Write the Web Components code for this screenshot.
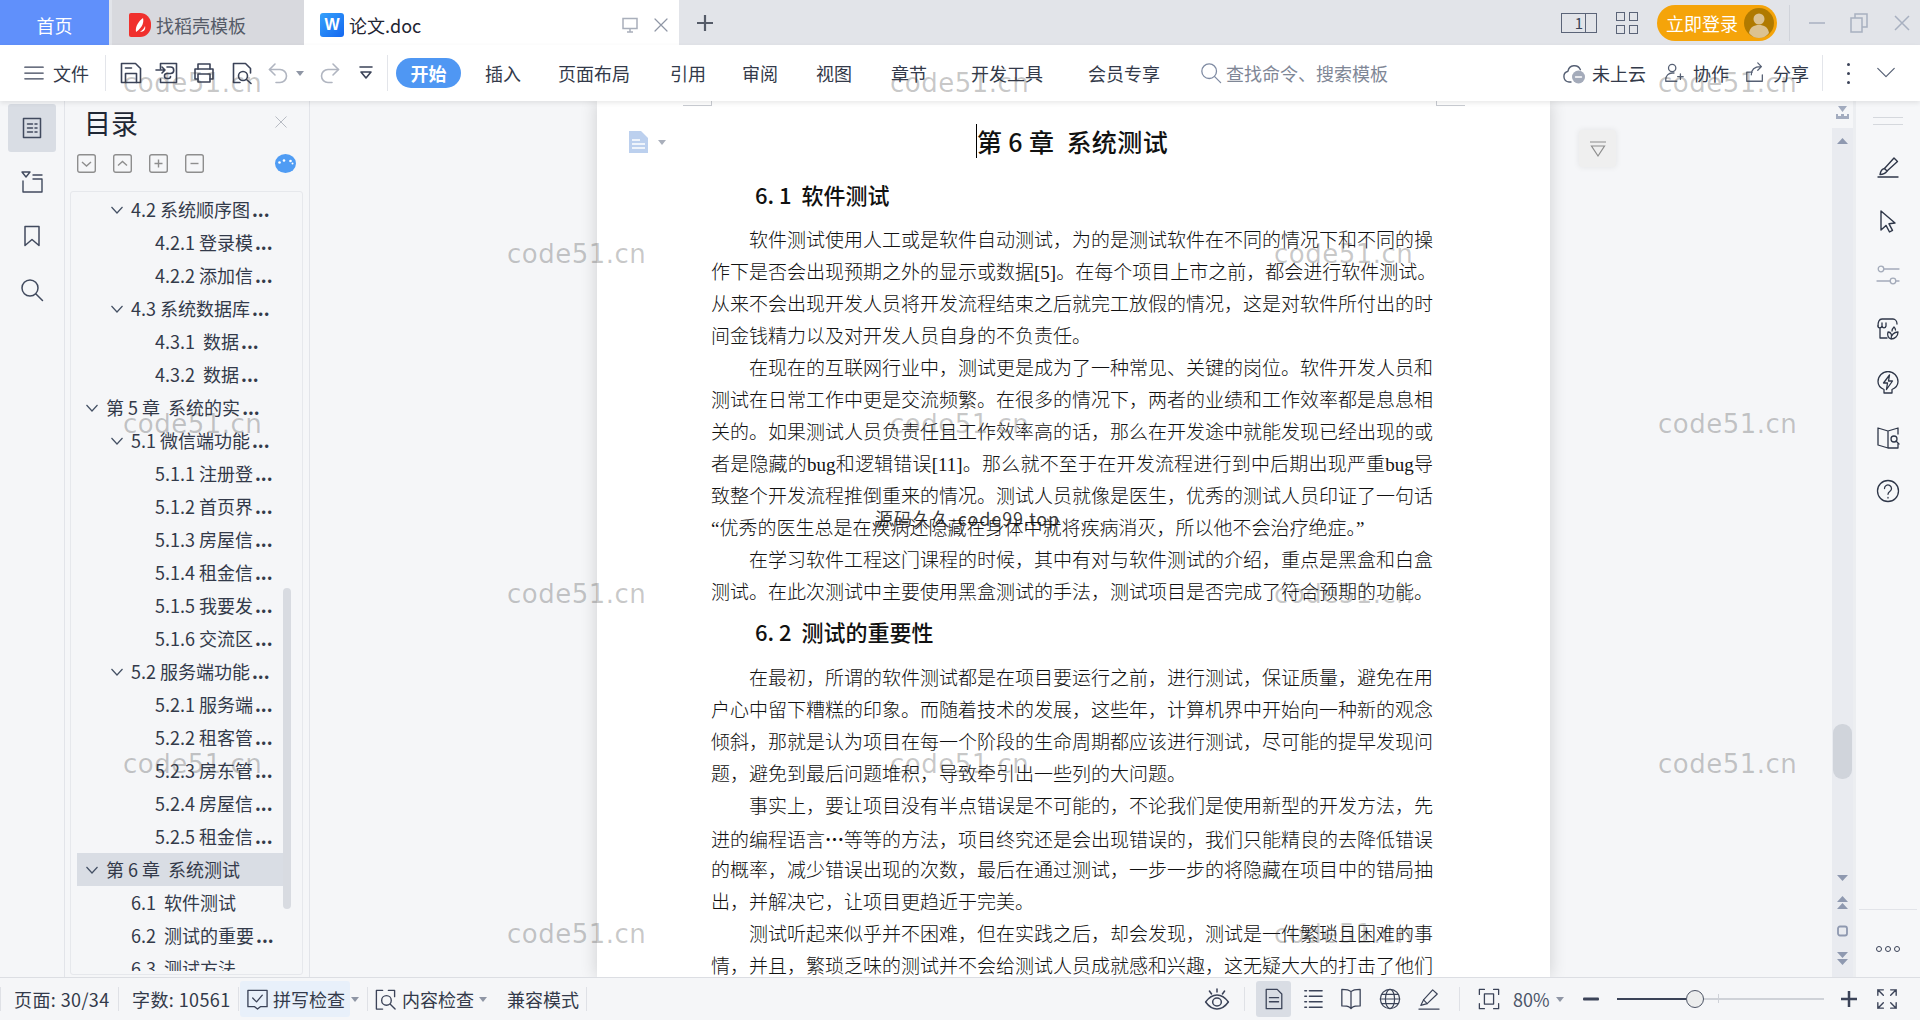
<!DOCTYPE html>
<html lang="zh-CN">
<head>
<meta charset="utf-8">
<title>论文.doc</title>
<style>
  html, body { margin: 0; height: 100%; overflow: hidden; }
  body { font-family: "Noto Sans CJK SC", sans-serif; background: #f5f6f8; }
</style>
</head>
<body>
<wps-app></wps-app>
<script>
// Icon strokes, all on a 24x24 box.
var ICONS = {
  menu: '<path d="M2 5h20M2 12h20M2 19h20"/>',
  save: '<path d="M2.5 2.5h14l5 5v14h-19z"/><path d="M6.5 21.5v-9h11v9M6.5 7h6"/>',
  insert: '<path d="M5.5 8V2.5h16v19h-16V18"/><path d="M1 9h9M7 6l3 3-3 3"/><path d="M12 6h3.5a3.2 3.2 0 0 1 0 6.5H12a2.5 2.5 0 0 0 0 5h1.5a2 2 0 0 0 2-2"/>',
  print: '<path d="M6 8V3h12v5"/><path d="M6 18H3V8h18v10h-3"/><path d="M6 13h12v8H6z"/>',
  preview: '<path d="M10 21.5H3.5v-19h12l5 5V12"/><circle cx="13" cy="15" r="4.5"/><path d="M16.5 18.5l4.5 4"/>',
  undo: '<path d="M9 3L3.5 8.5 9 14"/><path d="M3.5 8.5H14a6.5 6.5 0 0 1 0 13h-4"/>',
  redo: '<path d="M15 3l5.5 5.5L15 14"/><path d="M20.5 8.5H10a6.5 6.5 0 0 0 0 13h4"/>',
  quick: '<path d="M6 6h12M7 11l5 6 5-6z"/>',
  search: '<circle cx="10" cy="10" r="8"/><path d="M16 16l6.5 6.5"/>',
  cloud: '<path d="M9 21H7a5.5 5.5 0 0 1-1-10.8 6.5 6.5 0 0 1 12.4-1.5"/><circle cx="16.5" cy="16" r="6.5" fill="#a4abba" stroke="none"/><path d="M13.5 16h6" stroke="#fff"/>',
  people: '<circle cx="10" cy="6.5" r="4"/><path d="M3 21v-2c0-4 3-7 7-7h2M3 21h12"/><path d="M16 16h6M19 13v6"/>',
  share: '<path d="M9 11H3v10h17v-7"/><path d="M8 14c0-6 4-9 10-9M15 1l4 4-4 4"/>',
  chevdown: '<path d="M3 7l9 9 9-9"/>',
  toc: '<path d="M3.5 2.5h17v19h-17z"/><path d="M7.5 8h5M15 8h2M7.5 12h5M15 12h2M7.5 16h5M15 16h2"/>',
  tree: '<path d="M2 2h8L6 7z"/><path d="M13 5h9M3 11v11h19V9h-9"/>',
  bookmark: '<path d="M5 2.5h14v19l-7-6-7 6z"/>',
  close: '<path d="M3 3l18 18M21 3L3 21"/>',
  brush: '<path d="M2 22h20"/><path d="M8.5 13.5L18 3l3.5 3.5L11 16"/><path d="M8.5 13.5c-3 .5-4 3-4.5 6 2 0 5-.5 7-3.5z"/>',
  cursor: '<path d="M5 2l14 12-6 .8 3.5 6.5-3 1.7-3.5-6.6L5 21z"/>',
  sliders: '<circle cx="5" cy="6" r="2.8"/><path d="M8 6h15M1 18h13"/><circle cx="17" cy="18" r="2.8"/><path d="M20 18h3"/>',
  store: '<path d="M2 9c0-4 1-7 4-7h11c2 0 4 2 4 5"/><path d="M2 9c0 2.5 3.5 2.5 4 0V6M6 9c.5 2.5 3.5 2.5 4 0V6"/><path d="M4 11v10h7"/><path d="M15 22c-3-1-4-4-3-7 3 0 4.500 3 3 7zM15 22c4 0 7-3 7-7-4 0-7 3-7 7zM16 14c0-2 1-3 2-4 1 1 1.500 2 1.500 3"/>',
  bulb: '<path d="M8 22v-3.500c-3.500-1.500-6-4.500-6-8a10 10 0 0 1 20 0c0 3.500-2.500 6.500-6 8V22z"/><path d="M13.500 4L7.500 12h4l-1 6.500 6-8.500h-4z"/>',
  bookfind: '<path d="M12 6L2 3v17l10 3V6zM12 6l10-3v6M12 23h10v-4"/><circle cx="18" cy="14" r="3"/><path d="M20 16l3 3"/>',
  help: '<circle cx="12" cy="12" r="10.500"/><path d="M8.500 9.500a3.500 3.500 0 1 1 5.500 2.800c-1.300.9-2 1.600-2 3"/><path d="M12 18.500v.5"/>',
  spell: '<path d="M2 2.500h20v17h-7l-3 2.500-3-2.500H2z"/><path d="M7 10.500l4 4 6-7"/>',
  inspect: '<path d="M9 22H2.500V2.500H9M15 2.500h6.500V9"/><circle cx="13" cy="13" r="5"/><path d="M17 17l5 5"/>',
  eye: '<path d="M1.500 15c3-4.500 6.500-7 10.500-7s7.500 2.500 10.500 7c-3 4.500-6.500 7-10.500 7s-7.500-2.500-10.500-7z"/><circle cx="12" cy="15" r="4"/><path d="M12 2v3M5 4l2 3M19 4l-2 3"/>',
  page: '<path d="M3.500 1.500h12l5 5v16h-17z"/><path d="M7 10.500h10M7 15h10"/>',
  list: '<path d="M3 3h2M8 3h14M3 9h2M8 9h14M3 15h2M8 15h14M3 21h2M8 21h14"/>',
  book: '<path d="M12 4c-2-2-6-2.500-10-2.500v18c4 0 7 .5 8.500 1.500l1.500 1.500 1.500-1.500c1.500-1 4.500-1.500 8.500-1.500v-18c-4 0-8 .5-10 2.500zM12 4v18"/>',
  globe: '<circle cx="12" cy="12" r="10.500"/><path d="M1.500 12h21M3 7h18M3 17h18"/><ellipse cx="12" cy="12" rx="5" ry="10.500"/>',
  pen: '<path d="M1 23h22"/><path d="M3 19l3-6L16 2l5 4.500L10 17z"/><path d="M6 13l4 4"/>',
  fit: '<path d="M1.500 7V1.500H7M17 1.500h5.500V7M22.500 17v5.500H17M7 22.500H1.500V17"/><path d="M7 6.500h10v11H7z"/>',
  full: '<path d="M2 8V2h6M2 2l6 6M22 8V2h-6M22 2l-6 6M2 16v6h6M2 22l6-6M22 16v6h-6M22 22l-6-6"/>'
}

class UiIcon extends HTMLElement {
  constructor() {
    super()
    var size = this.getAttribute('size') || 24
    var w = this.getAttribute('w') || size
    var sw = this.getAttribute('sw') || 1.6
    var color = this.getAttribute('color') || '#3b4358'
    this.attachShadow({ mode: 'open' }).innerHTML = `
      <style>:host { display: inline-flex; flex: none; } svg { display: block; }</style>
      <svg width="${w}" height="${size}" viewBox="0 0 24 24" preserveAspectRatio="none" fill="none" stroke="${color}"
           stroke-width="${sw}" stroke-linecap="round" stroke-linejoin="round">${ICONS[this.getAttribute('name')] || ''}</svg>`
  }
}
customElements.define('ui-icon', UiIcon)

var templateTabs = document.createElement('template')
templateTabs.innerHTML = `
<style>
  :host { display: flex; height: 45px; background: #e2e4e9; font-size: 18px; flex: none; }
  .tab { display: flex; align-items: center; height: 45px; padding-top: 4px; box-sizing: border-box; white-space: nowrap; }
  .home { width: 109px; justify-content: center; background: #6090fb; color: #fff; }
  .tpl { width: 192px; margin-left: 3px; background: #d8d9de; color: #555b68; padding-left: 17px; }
  .doc { width: 375px; background: #fff; color: #1f2533; padding-left: 16px; }
  .red { width: 22px; height: 24px; background: #f0302d; border-radius: 2px 11px 11px 2px; margin-right: 5px; display: flex; align-items: center; justify-content: center; }
  .w { width: 24px; height: 24px; border-radius: 3px; background: linear-gradient(135deg, #35a1fb, #1467f0); color: #fff; font: 700 16px/24px "Liberation Sans", sans-serif; text-align: center; margin-right: 5px; }
  .doc .name { width: 272px; }
  .plus { margin-left: 18px; padding-top: 0; }
  .right { margin-left: auto; display: flex; align-items: center; height: 45px; }
  .device { display: flex; width: 36px; height: 20px; margin-top: 1px; border: 1.5px solid #5b6478; box-sizing: border-box; color: #3b4358; font: 15px/18px "Noto Sans CJK SC", sans-serif; }
  .device span { flex: 1; text-align: right; padding-right: 2px; }
  .device i { width: 11px; border-left: 1.5px solid #5b6478; box-sizing: border-box; position: relative; }
  .grid { display: grid; grid-template-columns: 9px 9px; gap: 4px; margin-left: 19px; }
  .grid i { height: 9px; border: 1.5px solid #5b6478; box-sizing: border-box; }
  .login { display: flex; align-items: center; width: 120px; height: 36px; margin-left: 19px; border-radius: 18px; background: #f5a40a; color: #fff; padding-left: 9px; box-sizing: border-box; white-space: nowrap; }
  .login svg { margin-left: 6px; flex: none; }
  .sep { width: 1px; height: 36px; background: #d0d3da; margin-left: 12px; }
</style>
<div class="tab home">首页</div>
<div class="tab tpl"><div class="red"><svg width="12" height="16" viewBox="0 0 12 16"><path d="M2 15C1 9 5 4 9 1c1 4 0 9-7 14zM6 15c2-2 4-3 5-6 1 3-1 6-5 6z" fill="#fff"/></svg></div>找稻壳模板</div>
<div class="tab doc"><div class="w">W</div><div class="name">论文.doc</div>
  <svg width="18" height="18" viewBox="0 0 18 18" fill="none" stroke="#a9afbb" stroke-width="1.500"><path d="M2 2.500h14v10H2zM9 12.500v3.500M6 16h6"/></svg>
  <ui-icon name="close" size="16" color="#8f96a5" sw="1.800" style="margin-left:14px"></ui-icon>
</div>
<div class="tab plus"><svg width="16" height="16" viewBox="0 0 16 16" stroke="#555b68" stroke-width="2.200"><path d="M0 8h16M8 0v16"/></svg></div>
<div class="right">
  <div class="device"><span>1</span><i></i></div>
  <div class="grid"><i></i><i></i><i></i><i></i></div>
  <div class="login">立即登录<svg width="30" height="30" viewBox="0 0 30 30"><circle cx="15" cy="15" r="15" fill="#b07a00"/><circle cx="15" cy="11" r="5.500" fill="#dcc290"/><path d="M5 25c1-6 5-8 10-8s9 2 10 8c-2 3-6 5-10 5s-8-2-10-5z" fill="#dcc290"/></svg></div>
  <div class="sep"></div>
  <svg style="margin-left:19px" width="16" height="16" viewBox="0 0 16 16" stroke="#a8b0c0" stroke-width="1.500" fill="none"><path d="M0 8h16"/></svg>
  <svg style="margin-left:25px" width="18" height="20" viewBox="0 0 18 20" stroke="#a8b0c0" stroke-width="1.500" fill="none"><path d="M5 5V1h12v13h-5M1 5h11v14H1z"/></svg>
  <svg style="margin-left:26px;margin-right:10px" width="16" height="16" viewBox="0 0 16 16" stroke="#a8b0c0" stroke-width="1.500" fill="none"><path d="M1 1l14 14M15 1L1 15"/></svg>
</div>`
class WpsTabs extends HTMLElement {
  constructor() {
    super()
    this.attachShadow({ mode: 'open' }).appendChild(templateTabs.content.cloneNode(true))
  }
}
customElements.define('wps-tabs', WpsTabs)

var templateToolbar = document.createElement('template')
templateToolbar.innerHTML = `
<style>
  :host { display: flex; align-items: center; height: 56px; background: #fff; padding-left: 23px; flex: none; box-sizing: border-box;
          font-size: 18px; color: #333a4a; box-shadow: 0 2px 5px rgba(0,0,0,.09); position: relative; z-index: 2; white-space: nowrap; }
  .sep { width: 1px; height: 36px; background: #e3e5ea; flex: none; }
  .pill { width: 65px; height: 30px; border-radius: 15px; background: #4f97f3; color: #fff; font-weight: 700; text-align: center; line-height: 30px; flex: none; }
  .caret { width: 0; height: 0; border: 4px solid transparent; border-top: 5px solid #8f96a5; border-bottom: 0; flex: none; }
  .find { color: #7f8796; }
  .dots { width: 20px; display: flex; flex-direction: column; align-items: center; gap: 6px; flex: none; }
  .dots i { width: 3px; height: 3px; border-radius: 50%; background: #3b4358; }
</style>
<ui-icon name="menu" size="20" w="22" sw="1.500"></ui-icon>
<span style="margin-left:8px">文件</span>
<div class="sep" style="margin-left:16px"></div>
<ui-icon name="save" style="margin-left:13px"></ui-icon>
<ui-icon name="insert" style="margin-left:12px"></ui-icon>
<ui-icon name="print" style="margin-left:13px"></ui-icon>
<ui-icon name="preview" style="margin-left:14px"></ui-icon>
<ui-icon name="undo" color="#b0b5c0" style="margin-left:12px"></ui-icon>
<div class="caret" style="margin-left:6px"></div>
<ui-icon name="redo" color="#b0b5c0" style="margin-left:14px"></ui-icon>
<ui-icon name="quick" style="margin-left:12px"></ui-icon>
<div class="sep" style="margin-left:9px"></div>
<div class="pill" style="margin-left:8px">开始</div>
<span style="margin-left:24px">插入</span>
<span style="margin-left:37px">页面布局</span>
<span style="margin-left:40px">引用</span>
<span style="margin-left:36px">审阅</span>
<span style="margin-left:38px">视图</span>
<span style="margin-left:39px">章节</span>
<span style="margin-left:44px">开发工具</span>
<span style="margin-left:45px">会员专享</span>
<ui-icon name="search" size="22" color="#7f8ba3" sw="1.400" style="margin-left:40px"></ui-icon>
<span class="find" style="margin-left:4px">查找命令、搜索模板</span>
<ui-icon name="cloud" style="margin-left:174px" sw="1.400" color="#566074"></ui-icon>
<span style="margin-left:6px">未上云</span>
<ui-icon name="people" size="22" sw="1.400" color="#566074" style="margin-left:17px"></ui-icon>
<span style="margin-left:8px">协作</span>
<ui-icon name="share" size="22" sw="1.400" color="#566074" style="margin-left:15px"></ui-icon>
<span style="margin-left:7px">分享</span>
<div class="sep" style="margin-left:13px"></div>
<div class="dots" style="margin-left:15px"><i></i><i></i><i></i></div>
<ui-icon name="chevdown" size="22" sw="1.300" color="#566074" style="margin-left:17px"></ui-icon>`
class WpsToolbar extends HTMLElement {
  constructor() {
    super()
    this.attachShadow({ mode: 'open' }).appendChild(templateToolbar.content.cloneNode(true))
  }
}
customElements.define('wps-toolbar', WpsToolbar)

// Outline entries: level, has chevron, label, cut off with dots, active
var TOC = [
  [2, 1, '4.2 系统顺序图', 1], [3, 0, '4.2.1 登录模', 1], [3, 0, '4.2.2 添加信', 1], [2, 1, '4.3 系统数据库', 1],
  [3, 0, '4.3.1 &nbsp;数据', 1], [3, 0, '4.3.2 &nbsp;数据', 1], [1, 1, '第 5 章 &nbsp;系统的实', 1],
  [2, 1, '5.1 微信端功能', 1], [3, 0, '5.1.1 注册登', 1], [3, 0, '5.1.2 首页界', 1], [3, 0, '5.1.3 房屋信', 1],
  [3, 0, '5.1.4 租金信', 1], [3, 0, '5.1.5 我要发', 1], [3, 0, '5.1.6 交流区', 1], [2, 1, '5.2 服务端功能', 1],
  [3, 0, '5.2.1 服务端', 1], [3, 0, '5.2.2 租客管', 1], [3, 0, '5.2.3 房东管', 1], [3, 0, '5.2.4 房屋信', 1],
  [3, 0, '5.2.5 租金信', 1], [1, 1, '第 6 章 &nbsp;系统测试', 0, 1], [2, 0, '6.1 &nbsp;软件测试', 0], [2, 0, '6.2 &nbsp;测试的重要', 1], [2, 0, '6.3 &nbsp;测试方法', 0]
]

class TocPanel extends HTMLElement {
  constructor() {
    super()
    var rows = TOC.map(function (r) {
      var left = { 1: 107, 2: 132, 3: 156 }[r[0]] - 72
      return `<div class="row ${r[4] ? 'on' : ''}" style="padding-left:${left}px">
        ${r[1] ? '<svg class="chev" width="12" height="8" viewBox="0 0 12 8" fill="none" stroke="#445064" stroke-width="1.200"><path d="M.5 1l5.500 6 5.500-6"/></svg>' : ''}
        <span>${r[2]}</span>${r[3] ? '<b>...</b>' : ''}</div>`
    }).join('')
    this.attachShadow({ mode: 'open' }).innerHTML = `
    <style>
      :host { display: flex; flex: none; width: 245px; height: 100%; box-sizing: border-box; flex-direction: column; border-right: 1px solid #e2e4e9; color: #333a4a; background: #f5f6f8; }
      .title { display: flex; align-items: center; height: 36px; margin-top: 3px; margin-bottom: 3px; padding-left: 19px; font-size: 27px; color: #1f2735; }
      .title ui-icon { margin-left: 136px; }
      .tools { display: flex; align-items: center; margin-top: 11px; padding-left: 12px; height: 19px; }
      .tools svg { margin-right: 17px; flex: none; }
      .blob { margin-left: 54px; }
      .box { position: relative; flex: 1; margin: 18px 6px 2px 5px; border: 1px solid #e6e8ec; border-radius: 3px; padding-top: 1px; min-height: 0; }
      .clip { height: 778px; overflow: hidden; }
      .row { position: relative; height: 33px; line-height: 33px; font-size: 18px; white-space: nowrap; display: flex; }
      .row b { font-weight: 700; margin-left: 2px; }
      .row.on { background: #d9dde4; margin: 0 19px 0 6px; padding-left: 29px !important; }
      .chev { position: absolute; top: 13px; margin-left: -20px; }
      .bar { position: absolute; right: 11px; top: 396px; width: 8px; height: 321px; background: #d8dbe1; border-radius: 4px; }
    </style>
    <div class="title">目录<ui-icon name="close" size="14" sw="1" color="#8a909c"></ui-icon></div>
    <div class="tools">
      <svg width="19" height="19" viewBox="0 0 19 19" fill="none" stroke="#8e8e8e" stroke-width="1.400"><rect x=".7" y=".7" width="17.600" height="17.600" rx="2"/><path d="M5 8l4.500 4L14 8"/></svg>
      <svg width="19" height="19" viewBox="0 0 19 19" fill="none" stroke="#8e8e8e" stroke-width="1.400"><rect x=".7" y=".7" width="17.600" height="17.600" rx="2"/><path d="M5 11.500l4.500-4 4.500 4"/></svg>
      <svg width="19" height="19" viewBox="0 0 19 19" fill="none" stroke="#8e8e8e" stroke-width="1.400"><rect x=".7" y=".7" width="17.600" height="17.600" rx="2"/><path d="M5.500 9.500h8M9.500 5.500v8"/></svg>
      <svg width="19" height="19" viewBox="0 0 19 19" fill="none" stroke="#8e8e8e" stroke-width="1.400"><rect x=".7" y=".7" width="17.600" height="17.600" rx="2"/><path d="M5.500 9.500h8"/></svg>
      <svg class="blob" width="21" height="19" viewBox="0 0 21 19"><ellipse cx="10.500" cy="9.500" rx="10.500" ry="9.500" fill="#4f9cf4"/><circle cx="4.500" cy="8.500" r="1.300" fill="#fff"/><circle cx="9" cy="6.500" r="1.300" fill="#fff"/><circle cx="15.500" cy="7" r="1.300" fill="#fff"/><circle cx="17.500" cy="9.500" r="1" fill="#fff"/></svg>
    </div>
    <div class="box"><div class="clip">${rows}</div><div class="bar"></div></div>`
  }
}
customElements.define('toc-panel', TocPanel)

class SideStrip extends HTMLElement {
  constructor() {
    super()
    this.attachShadow({ mode: 'open' }).innerHTML = `
    <style>
      :host { display: flex; flex: none; flex-direction: column; align-items: center; width: 65px; height: 100%; box-sizing: border-box; border-right: 1px solid #e2e4e9; background: #f5f6f8; padding-top: 3px; }
      div { display: flex; align-items: center; justify-content: center; width: 48px; height: 54px; }
      .on { height: 48px; margin-bottom: 3px; background: #d9dde4; border-radius: 3px; }
    </style>
    <div class="on"><ui-icon name="toc" sw="1.500" color="#414a5e"></ui-icon></div>
    <div><ui-icon name="tree" sw="1.400" color="#414a5e"></ui-icon></div>
    <div><ui-icon name="bookmark" sw="1.500" color="#414a5e"></ui-icon></div>
    <div><ui-icon name="search" sw="1.500" color="#414a5e"></ui-icon></div>`
  }
}
customElements.define('side-strip', SideStrip)

// Each block: type, lines, gap above. 'x' marks a line that runs to the right margin even if it ends the block.
var DOC_TEXT = [
  ['h1', '第 6 章&nbsp; 系统测试'],
  ['h2', '6. 1&nbsp; 软件测试', 19],
  ['p', ['软件测试使用人工或是软件自动测试，为的是测试软件在不同的情况下和不同的操',
    '作下是否会出现预期之外的显示或数据[5]。在每个项目上市之前，都会进行软件测试。',
    '从来不会出现开发人员将开发流程结束之后就完工放假的情况，这是对软件所付出的时',
    '间金钱精力以及对开发人员自身的不负责任。'], 14],
  ['p', ['在现在的互联网行业中，测试更是成为了一种常见、关键的岗位。软件开发人员和',
    '测试在日常工作中更是交流频繁。在很多的情况下，两者的业绩和工作效率都是息息相',
    '关的。如果测试人员负责任且工作效率高的话，那么在开发途中就能发现已经出现的或',
    '者是隐藏的bug和逻辑错误[11]。那么就不至于在开发流程进行到中后期出现严重bug导',
    '致整个开发流程推倒重来的情况。测试人员就像是医生，优秀的测试人员印证了一句话',
    '“优秀的医生总是在疾病还隐藏在身体中就将疾病消灭，所以他不会治疗绝症。”']],
  ['p', ['在学习软件工程这门课程的时候，其中有对与软件测试的介绍，重点是黑盒和白盒',
    '测试。在此次测试中主要使用黑盒测试的手法，测试项目是否完成了符合预期的功能。'], 0, 'x'],
  ['h2', '6. 2&nbsp; 测试的重要性', 5],
  ['p', ['在最初，所谓的软件测试都是在项目要运行之前，进行测试，保证质量，避免在用',
    '户心中留下糟糕的印象。而随着技术的发展，这些年，计算机界中开始向一种新的观念',
    '倾斜，那就是认为项目在每一个阶段的生命周期都应该进行测试，尽可能的提早发现问',
    '题，避免到最后问题堆积，导致牵引出一些列的大问题。'], 15],
  ['p', ['事实上，要让项目没有半点错误是不可能的，不论我们是使用新型的开发方法，先',
    '进的编程语言<span class="cjk">…</span>等等的方法，项目终究还是会出现错误的，我们只能精良的去降低错误',
    '的概率，减少错误出现的次数，最后在通过测试，一步一步的将隐藏在项目中的错局抽',
    '出，并解决它，让项目更趋近于完美。']],
  ['p', ['测试听起来似乎并不困难，但在实践之后，却会发现，测试是一件繁琐且困难的事',
    '情，并且，繁琐乏味的测试并不会给测试人员成就感和兴趣，这无疑大大的打击了他们'], 0, 'x']
]

class DocPage extends HTMLElement {
  constructor() {
    super()
    var html = DOC_TEXT.map(function (b) {
      if (b[0] === 'h1') return `<div class="h1"><span>${b[1]}</span></div>`
      if (b[0] === 'h2') return `<div class="h2" style="margin-top:${b[2]}px">${b[1]}</div>`
      return `<div class="para" style="margin-top:${b[2] || 0}px">` + b[1].map(function (t, i) {
        var last = i === b[1].length - 1 && b[3] !== 'x'
        return `<div class="l ${i === 0 ? 'first' : ''} ${last ? 'end' : ''}">${t}</div>`
      }).join('') + '</div>'
    }).join('')
    this.attachShadow({ mode: 'open' }).innerHTML = `
    <style>
      :host { display: block; position: relative; flex: none; width: 953px; height: 100%; margin-left: 287px; background: #fff; box-sizing: border-box;
              padding: 23px 0 0 114px; overflow: hidden; color: #111; box-shadow: 0 0 16px rgba(0,0,0,.16); }
      .wrap { width: 722px; }
      .h1 { height: 34px; line-height: 34px; font-size: 25px; font-weight: 500; text-align: center; color: #111; white-space: nowrap; letter-spacing: .4px; }
      .h1 span { display: inline-block; border-left: 1.500px solid #000; height: 34px; }
      .h2 { height: 34px; line-height: 34px; padding-left: 44px; font-size: 22px; font-weight: 500; white-space: nowrap; }
      .l { height: 32px; font: 300 19px/32px "Liberation Serif", "Noto Sans CJK SC", sans-serif; text-align: justify; text-align-last: justify; white-space: nowrap; }
      .l.first { text-indent: 38px; }
      .l.end { text-align-last: left; }
      .cjk { font-family: "Noto Sans CJK SC", sans-serif; font-weight: 700; }
      .crop { position: absolute; top: 0; width: 28px; height: 4px; border-bottom: 1px solid #c9ccd2; }
      .crop.a { left: 86px; border-right: 1px solid #c9ccd2; }
      .crop.b { left: 839px; border-left: 1px solid #c9ccd2; }
      .note { position: absolute; left: 32px; top: 30px; display: flex; align-items: center; gap: 10px; }
      .tri { width: 0; height: 0; border: 4px solid transparent; border-top: 5px solid #a9afbb; border-bottom: 0; }
    </style>
    <div class="crop a"></div><div class="crop b"></div>
    <div class="note"><svg width="19" height="22" viewBox="0 0 19 22"><path d="M0 0h12l7 7v15H0z" fill="#bcd0ee"/><path d="M3 9h8M3 13h13M3 17h13" stroke="#fff" stroke-width="1.500"/></svg><div class="tri"></div></div>
    <div class="wrap">${html}</div>`
  }
}
customElements.define('doc-page', DocPage)

class RightRail extends HTMLElement {
  constructor() {
    super()
    this.attachShadow({ mode: 'open' }).innerHTML = `
    <style>
      :host { display: flex; flex: none; width: 88px; height: 100%; }
      .scroll { position: relative; width: 21px; background: #e9ebf0; margin-top: 27px; }
      .thumb { position: absolute; left: 1px; top: 596px; width: 19px; height: 55px; border-radius: 9px; background: #d0d4db; }
      .scroll svg { position: absolute; left: 3px; }
      .rail { flex: 1; display: flex; flex-direction: column; align-items: center; background: #f6f7f9; border-left: 3px solid #eceef1; }
      .grip { width: 30px; height: 6px; margin-top: 16px; border-top: 1.500px solid #d5d8dd; border-bottom: 1.500px solid #d5d8dd; box-sizing: content-box; }
      .rail ui-icon { margin-top: 30px; }
      .hr { width: 58px; height: 1px; background: #e2e4e9; margin-top: 406px; }
      .rings { display: flex; gap: 3px; margin-top: 36px; }
      .rings i { width: 6px; height: 6px; border: 1.500px solid #3b4358; border-radius: 50%; box-sizing: border-box; }
    </style>
    <div class="scroll">
      <svg width="15" height="13" viewBox="0 0 15 13" fill="#a3acbf" style="top:-22px"><path d="M3 0h9L7.500 6zM1 8h2v2h3V8h3v2h3V8h2v5H1z"/></svg>
      <svg width="15" height="8" viewBox="0 0 15 8" fill="#8f99b0" style="top:9px"><path d="M7.500 1l5.500 6H2z"/></svg>
      <div class="thumb"></div>
      <svg width="15" height="8" viewBox="0 0 15 8" fill="#8f99b0" style="top:746px"><path d="M2 1h11L7.500 7z"/></svg>
      <svg width="15" height="14" viewBox="0 0 15 14" fill="#8f99b0" style="top:768px"><path d="M7.500 0L13 6H2zM7.500 7L13 13H2z"/></svg>
      <svg width="15" height="12" viewBox="0 0 15 12" fill="none" stroke="#8f99b0" stroke-width="1.800" style="top:797px"><rect x="3" y="1.500" width="9" height="9" rx="2"/></svg>
      <svg width="15" height="14" viewBox="0 0 15 14" fill="#8f99b0" style="top:824px"><path d="M2 0h11L7.500 6zM2 7h11L7.500 13z"/></svg>
    </div>
    <div class="rail">
      <div class="grip"></div>
      <ui-icon name="brush" sw="1.400" color="#2f3749"></ui-icon>
      <ui-icon name="cursor" sw="1.400" color="#2f3749"></ui-icon>
      <ui-icon name="sliders" sw="1.300" color="#a4abba"></ui-icon>
      <ui-icon name="store" sw="1.300" color="#2f3749"></ui-icon>
      <ui-icon name="bulb" sw="1.300" color="#2f3749"></ui-icon>
      <ui-icon name="bookfind" sw="1.300" color="#2f3749"></ui-icon>
      <ui-icon name="help" sw="1.300" color="#2f3749"></ui-icon>
      <div class="hr"></div>
      <div class="rings"><i></i><i></i><i></i></div>
    </div>`
  }
}
customElements.define('right-rail', RightRail)

var templateStatus = document.createElement('template')
templateStatus.innerHTML = `
<style>
  :host { display: flex; align-items: center; height: 43px; flex: none; box-sizing: border-box; border-top: 1px solid #dcdee3; background: #f5f6f8;
          font-size: 18px; color: #333a4a; white-space: nowrap; position: relative; z-index: 2; }
  .sep { width: 1px; height: 24px; background: #dfe1e6; flex: none; }
  .sel { display: flex; align-items: center; height: 36px; background: #e8f0fa; border-radius: 3px; flex: none; }
  .on { background: #d9dde4; justify-content: center; }
  .caret { width: 0; height: 0; border: 4px solid transparent; border-top: 5px solid #8f96a5; border-bottom: 0; flex: none; }
  .line { height: 1.500px; flex: none; }
  .knob { width: 18px; height: 18px; border: 1.500px solid #4c5364; border-radius: 50%; background: #eceded; box-sizing: border-box; flex: none; }
  .tail { position: relative; background: #cfd2d8; }
  .tail::after { content: ""; position: absolute; left: 14px; top: -4px; width: 1px; height: 9px; background: #cfd2d8; }
</style>
<div class="sep"></div>
<span style="margin-left:13px;width:96px;letter-spacing:.4px">页面: 30/34</span>
<div class="sep" style="margin-left:8px"></div>
<span style="margin-left:13px;width:98px;letter-spacing:.4px">字数: 10561</span>
<div class="sep" style="margin-left:8px"></div>
<div class="sel" style="margin-left:1px;width:110px"><ui-icon name="spell" size="23" sw="1.400" style="margin-left:6px"></ui-icon><span style="margin-left:4px">拼写检查</span></div>
<div class="caret" style="margin-left:1px"></div>
<div class="sep" style="margin-left:8px"></div>
<ui-icon name="inspect" size="23" sw="1.400" style="margin-left:6px"></ui-icon>
<span style="margin-left:5px">内容检查</span>
<div class="caret" style="margin-left:5px"></div>
<span style="margin-left:20px">兼容模式</span>
<div class="sep" style="margin-left:7px"></div>
<ui-icon name="eye" size="24" w="26" sw="1.400" style="margin-left:617px"></ui-icon>
<div class="sep" style="margin-left:14px"></div>
<div class="sel on" style="margin-left:11px;width:35px"><ui-icon name="page" size="22" sw="1.400"></ui-icon></div>
<ui-icon name="list" size="22" sw="1.400" style="margin-left:11px"></ui-icon>
<ui-icon name="book" size="22" sw="1.400" style="margin-left:16px"></ui-icon>
<ui-icon name="globe" size="22" sw="1.300" style="margin-left:17px"></ui-icon>
<ui-icon name="pen" size="22" sw="1.300" style="margin-left:17px"></ui-icon>
<div class="sep" style="margin-left:19px"></div>
<ui-icon name="fit" size="22" sw="1.400" style="margin-left:18px"></ui-icon>
<span style="margin-left:13px;color:#4c5568;width:37px">80%</span>
<div class="caret" style="margin-left:6px"></div>
<svg width="16" height="4" viewBox="0 0 16 4" style="margin-left:19px;flex:none"><rect width="16" height="3" y=".5" rx="1" fill="#3b4358"/></svg>
<div class="line" style="margin-left:18px;width:69px;background:#3b4358"></div>
<div class="knob"></div>
<div class="line tail" style="width:120px"></div>
<svg width="16" height="16" viewBox="0 0 16 16" stroke="#3b4358" stroke-width="2.500" style="margin-left:17px;flex:none"><path d="M0 8h16M8 0v16"/></svg>
<ui-icon name="full" size="22" sw="1.500" style="margin-left:19px"></ui-icon>`
class StatusBar extends HTMLElement {
  constructor() {
    super()
    this.attachShadow({ mode: 'open' }).appendChild(templateStatus.content.cloneNode(true))
  }
}
customElements.define('status-bar', StatusBar)

// Watermarks sit on top of everything, at their place on the screen.
class WaterMarks extends HTMLElement {
  constructor() {
    super()
    var spots = [[123, 83], [890, 83], [1658, 83], [507, 254], [1274, 254], [123, 424], [890, 424], [1658, 424],
      [507, 594], [1274, 594], [123, 764], [890, 764], [1658, 764], [507, 934], [1274, 934]]
    var html = spots.map(function (s) { return `<span style="left:${s[0]}px;top:${s[1] - 17}px">code51.cn</span>` }).join('')
    this.attachShadow({ mode: 'open' }).innerHTML = `
    <style>
      :host { position: absolute; left: 0; top: 0; width: 1920px; height: 1020px; pointer-events: none; z-index: 5; overflow: hidden; }
      span { position: absolute; font: 26px/34px "DejaVu Sans", sans-serif; letter-spacing: .5px; color: rgba(60,60,60,.28); white-space: nowrap; }
      .mid { left: 875px; top: 505px; font: 18px/26px "Noto Sans CJK SC", sans-serif; color: rgba(20,20,20,.85); letter-spacing: .9px; }
    </style>
    ${html}<span class="mid">源码久久-code99.top</span>`
  }
}
customElements.define('water-marks', WaterMarks)

class WpsApp extends HTMLElement {
  constructor() {
    super()
    this.attachShadow({ mode: 'open' }).innerHTML = `
    <style>
      :host { display: flex; flex-direction: column; position: relative; width: 1920px; height: 1020px; overflow: hidden; }
      .body { flex: 1; display: flex; min-height: 0; background: #f5f6f8; }
      .work { position: relative; flex: 1; display: flex; min-width: 0; }
      .float { position: absolute; left: 1269px; top: 29px; width: 37px; height: 37px; background: #efefef; border-radius: 3px; box-shadow: 0 0 6px rgba(0,0,0,.08); display: flex; align-items: center; justify-content: center; }
    </style>
    <wps-tabs></wps-tabs>
    <wps-toolbar></wps-toolbar>
    <div class="body">
      <side-strip></side-strip>
      <toc-panel></toc-panel>
      <div class="work">
        <doc-page></doc-page>
        <div class="float"><svg width="18" height="18" viewBox="0 0 18 18" fill="none" stroke="#8d8d8d" stroke-width="1.200"><path d="M1 2h16M2.500 6h13L9 16z"/></svg></div>
      </div>
      <right-rail></right-rail>
    </div>
    <status-bar></status-bar>
    <water-marks></water-marks>`
  }
}
customElements.define('wps-app', WpsApp)
</script>
</body>
</html>
